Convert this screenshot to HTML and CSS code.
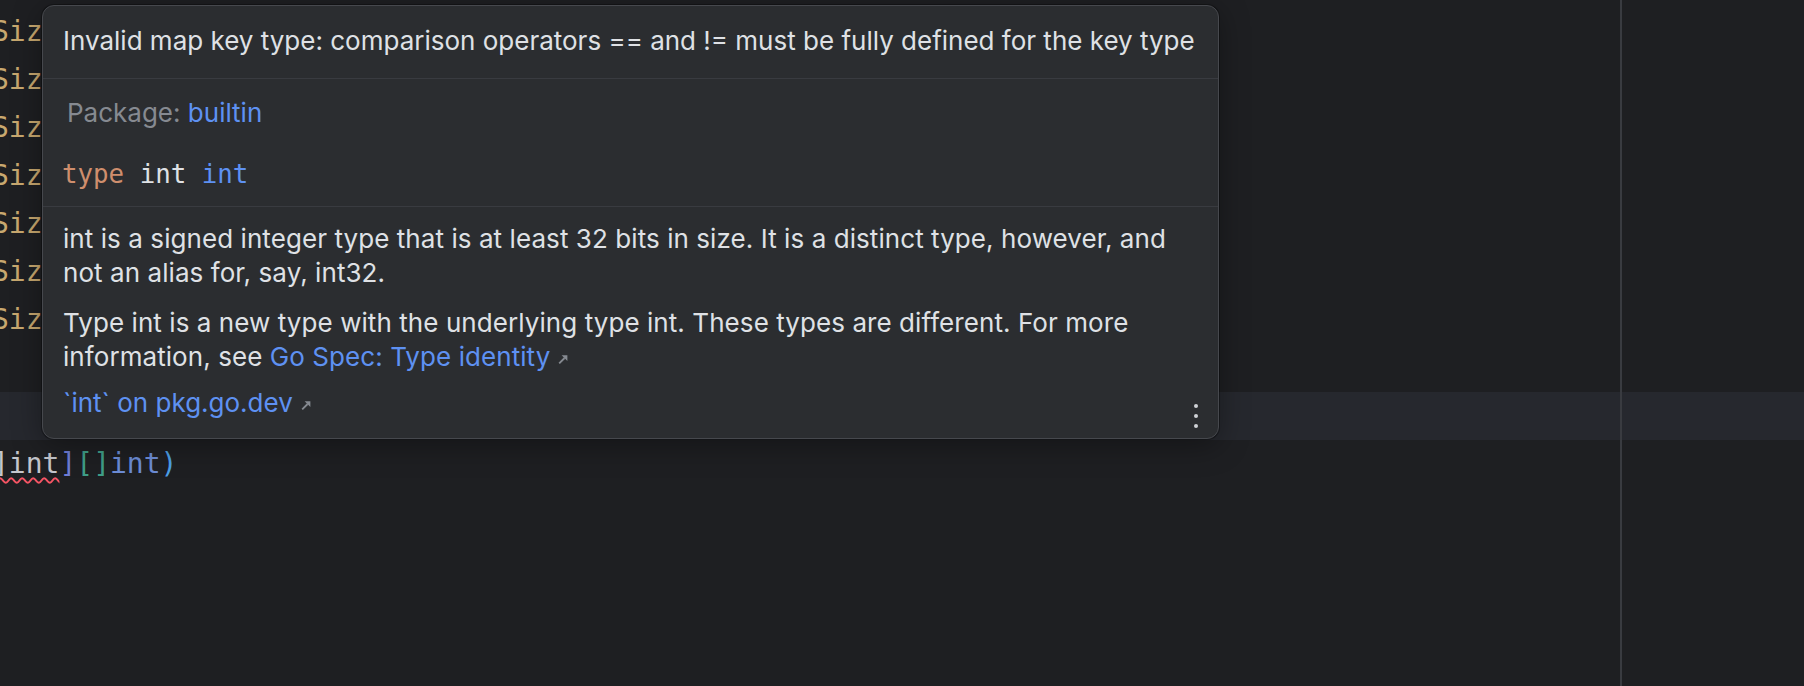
FILE: index.html
```html
<!DOCTYPE html>
<html lang="en">
<head>
<meta charset="utf-8">
<title>Quick documentation</title>
<link rel="stylesheet" href="styles.css">
</head>
<body>
<div class="editor">
  <div class="line"><span class="fld">Size</span></div>
  <div class="line"><span class="fld">Size</span></div>
  <div class="line"><span class="fld">Size</span></div>
  <div class="line"><span class="fld">Size</span></div>
  <div class="line"><span class="fld">Size</span></div>
  <div class="line"><span class="fld">Size</span></div>
  <div class="line"><span class="fld">Size</span></div>
  <div class="line"></div>
  <div class="line current"></div>
  <div class="line"><span class="err">]int</span><span class="br1">]</span><span class="br2">[]</span><span class="kw-type">int</span><span class="br3">)</span></div>
  <div class="line"></div>
</div>

<div class="popup">
  <div class="pop-head">Invalid map key type: comparison operators == and != must be fully defined for the key type</div>
  <div class="pop-info">
    <div class="pkg"><span class="pkg-label">Package:</span> <span class="link">builtin</span></div>
    <div class="decl"><span class="d-kw">type</span> <span class="d-name">int</span> <span class="d-type">int</span></div>
  </div>
  <div class="pop-body">
    <p>int is a signed integer type that is at least 32 bits in size. It is a distinct type, however, and<br>not an alias for, say, int32.</p>
    <p class="p2">Type int is a new type with the underlying type int. These types are different. For more<br>information, see <span class="link">Go Spec: Type identity</span><svg class="ext" viewBox="0 0 12 12" width="12" height="12" aria-hidden="true"><path d="M2.2 10.4 L7.6 5" stroke="currentColor" stroke-width="1.8" fill="none"/><path d="M4.6 2.2 H10.4 V8 Z" fill="currentColor"/></svg></p>
    <div class="foot">
      <span><span class="link">`int` on pkg.go.dev</span><svg class="ext" viewBox="0 0 12 12" width="12" height="12" aria-hidden="true"><path d="M2.2 10.4 L7.6 5" stroke="currentColor" stroke-width="1.8" fill="none"/><path d="M4.6 2.2 H10.4 V8 Z" fill="currentColor"/></svg></span>
      <svg class="more" viewBox="0 0 4 24" width="4" height="24" aria-hidden="true"><circle cx="2" cy="2" r="2"/><circle cx="2" cy="12" r="2"/><circle cx="2" cy="22" r="2"/></svg>
    </div>
  </div>
</div>
</body>
</html>
```

FILE: styles.css
```css
* { box-sizing: border-box; }
html, body { margin: 0; height: 100%; }
body {
  background: #1e1f22;
  overflow: hidden;
  position: relative;
  font-family: Inter, "Noto Sans", sans-serif;
}

/* editor */
.editor {
  position: relative;
  height: 686px;
  padding-top: 8px;
  font-family: "DejaVu Sans Mono", "Liberation Mono", monospace;
  font-size: 28px;
}
.editor::after {
  content: "";
  position: absolute;
  top: 0;
  bottom: 0;
  left: 1620px;
  width: 2px;
  background: #393b40;
}
.line {
  height: 48px;
  line-height: 48px;
  white-space: pre;
  text-indent: -8px;
  color: #bcbec4;
}
.current { background: #26282e; }
.fld { color: #c8a86f; }
.err {
  color: #c4c6cc;
  text-decoration: underline wavy #f75464;
  text-decoration-thickness: 1.5px;
  text-underline-offset: 4px;
}
.br1 { color: #6f7dd6; }
.br2 { color: #3f9e88; }
.kw-type { color: #6c8cd5; }
.br3 { color: #4c9fe6; }

/* documentation popup */
.popup {
  position: absolute;
  left: 42px;
  top: 5px;
  width: 1177px;
  background: #2b2d30;
  border: 1px solid #46484d;
  border-radius: 12px;
  box-shadow: 0 0 0 1px rgba(0, 0, 0, 0.3), 0 6px 30px rgba(0, 0, 0, 0.35);
  color: #dfe1e5;
  font-size: 26px;
  line-height: 34px;
}
.pop-head {
  padding: 17.5px 20px 20.5px;
  border-bottom: 1px solid #393b40;
  white-space: nowrap;
}
.pop-info {
  padding: 16.5px 20px 15px;
  border-bottom: 1px solid #393b40;
}
.pkg { padding-left: 4px; }
.pkg-label { color: #868a91; }
.link { color: #5e91f2; }
.decl {
  margin-top: 27.5px;
  margin-left: -1px;
  font-family: "DejaVu Sans Mono", "Liberation Mono", monospace;
  font-size: 25.8px;
}
.d-kw { color: #cf8e6d; }
.d-name { color: #dfe1e5; }
.d-type { color: #5e91f2; }

.pop-body { padding: 15px 20px 18.8px; }
.pop-body p { margin: 0; white-space: nowrap; letter-spacing: 0.07px; }
.pop-body .p2 { margin-top: 16px; }
.ext {
  color: #868a91;
  margin-left: 7px;
  vertical-align: 1px;
}
.foot {
  margin-top: 11.5px;
  display: flex;
  justify-content: space-between;
  align-items: flex-end;
}
.more {
  fill: #cfd1d6;
  margin-bottom: -8.8px;
}
```
